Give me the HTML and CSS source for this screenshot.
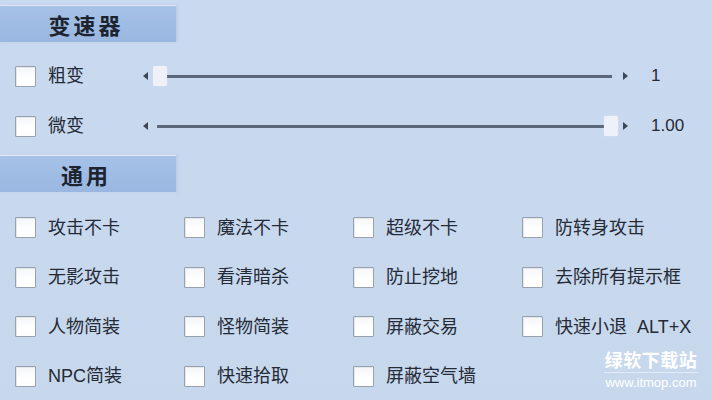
FILE: index.html
```html
<!DOCTYPE html>
<html lang="zh">
<head>
<meta charset="utf-8">
<title>变速器</title>
<link rel="stylesheet" href="styles.css">
</head>
<body>
<div class="panel">
  <div class="section-title">变速器</div>

  <div class="slider-row">
    <span class="box"></span>
    <span class="label slider-label">粗变</span>
    <div class="slider">
      <span class="arrow arrow-left"></span>
      <div class="track"><span class="line"></span><span class="thumb thumb-start"></span></div>
      <span class="arrow arrow-right"></span>
    </div>
    <span class="value">1</span>
  </div>

  <div class="slider-row">
    <span class="box"></span>
    <span class="label slider-label">微变</span>
    <div class="slider">
      <span class="arrow arrow-left"></span>
      <div class="track"><span class="line"></span><span class="thumb thumb-end"></span></div>
      <span class="arrow arrow-right"></span>
    </div>
    <span class="value">1.00</span>
  </div>

  <div class="section-title second">通用</div>

  <div class="grid">
    <div class="item"><span class="box"></span><span class="label">攻击不卡</span></div>
    <div class="item"><span class="box"></span><span class="label">魔法不卡</span></div>
    <div class="item"><span class="box"></span><span class="label">超级不卡</span></div>
    <div class="item"><span class="box"></span><span class="label">防转身攻击</span></div>

    <div class="item"><span class="box"></span><span class="label">无影攻击</span></div>
    <div class="item"><span class="box"></span><span class="label">看清暗杀</span></div>
    <div class="item"><span class="box"></span><span class="label">防止挖地</span></div>
    <div class="item"><span class="box"></span><span class="label">去除所有提示框</span></div>

    <div class="item"><span class="box"></span><span class="label">人物简装</span></div>
    <div class="item"><span class="box"></span><span class="label">怪物简装</span></div>
    <div class="item"><span class="box"></span><span class="label">屏蔽交易</span></div>
    <div class="item"><span class="box"></span><span class="label">快速小退&nbsp; ALT+X</span></div>

    <div class="item"><span class="box"></span><span class="label">NPC简装</span></div>
    <div class="item"><span class="box"></span><span class="label">快速拾取</span></div>
    <div class="item"><span class="box"></span><span class="label">屏蔽空气墙</span></div>
  </div>

  <div class="watermark">
    <div class="wm-title">绿软下载站</div>
    <div class="wm-url">www.itmop.com</div>
  </div>
</div>
</body>
</html>
```

FILE: styles.css
```css
html, body {
  margin: 0;
  padding: 0;
}
body {
  width: 712px;
  height: 400px;
  overflow: hidden;
  background: #c8d9ee;
  font-family: "Liberation Sans", "Noto Sans CJK SC", sans-serif;
  color: #242a36;
}
.panel {
  position: relative;
  width: 712px;
  height: 400px;
  padding-top: 5px;
  box-sizing: border-box;
  background: linear-gradient(180deg, #c9d9ef 0%, #c7d8ed 100%);
}
.section-title {
  width: 176px;
  height: 37px;
  box-sizing: border-box;
  border-top: 1px solid #dfe9f6;
  background: linear-gradient(180deg, #a8c2e7 0%, #9fbce4 50%, #9ab7e1 100%);
  box-shadow: 2px 0 2px rgba(180, 200, 228, 0.6);
  display: flex;
  align-items: center;
  justify-content: center;
  padding-right: 4px;
  font-size: 22px;
  font-weight: bold;
  letter-spacing: 3px;
  color: #1d2430;
}
.section-title.second {
  margin-top: 4px;
}
.slider-row {
  display: flex;
  align-items: center;
  height: 50px;
  padding-left: 15px;
}
.section-title + .slider-row {
  margin-top: 9px;
}
.box {
  flex: none;
  width: 21px;
  height: 21px;
  box-sizing: border-box;
  border: 1px solid #98a2ae;
  border-radius: 1px;
  background: linear-gradient(180deg, #f4f6f9 0%, #ffffff 60%, #fdfdfe 100%);
  box-shadow: inset 1px 1px 0 #e3e7ec;
}
.label {
  margin-left: 12px;
  font-size: 18px;
  line-height: 22px;
  white-space: nowrap;
  color: #242a36;
}
.slider-label {
  width: 93px;
  flex: none;
}
.slider {
  display: flex;
  align-items: center;
  flex: none;
}
.arrow {
  width: 0;
  height: 0;
  border-top: 4px solid transparent;
  border-bottom: 4px solid transparent;
}
.arrow-left {
  margin-left: 2px;
  border-right: 5px solid #3d4656;
}
.arrow-right {
  border-left: 5px solid #3d4656;
}
.track {
  position: relative;
  width: 465px;
  height: 20px;
  margin: 0 5px;
}
.line {
  position: absolute;
  left: 4px;
  right: 6px;
  top: 9px;
  height: 3px;
  background: #5b687b;
}
.thumb {
  position: absolute;
  top: 0;
  width: 14px;
  height: 20px;
  background: #eef2f8;
  border-radius: 2px;
  box-shadow: 0 0 1px rgba(255,255,255,0.8);
}
.thumb-start { left: 0; }
.thumb-end { right: 0; }
.value {
  margin-left: 23px;
  font-size: 17px;
  color: #242a36;
}
.grid {
  margin-top: 11px;
  padding-left: 15px;
  display: grid;
  grid-template-columns: repeat(4, 169px);
  grid-auto-rows: 49.5px;
}
.item {
  display: flex;
  align-items: center;
}
.watermark {
  position: absolute;
  left: 604px;
  top: 348px;
  width: 94px;
  color: #ffffff;
  text-align: center;
  white-space: nowrap;
}
.wm-title {
  font-family: "Noto Sans CJK SC", sans-serif;
  font-size: 18px;
  font-weight: bold;
  line-height: 22px;
  letter-spacing: 0.5px;
  padding-bottom: 2px;
  border-bottom: 1px solid rgba(255,255,255,0.5);
}
.wm-url {
  font-size: 13px;
  line-height: 17px;
  margin-top: 1px;
}
```
